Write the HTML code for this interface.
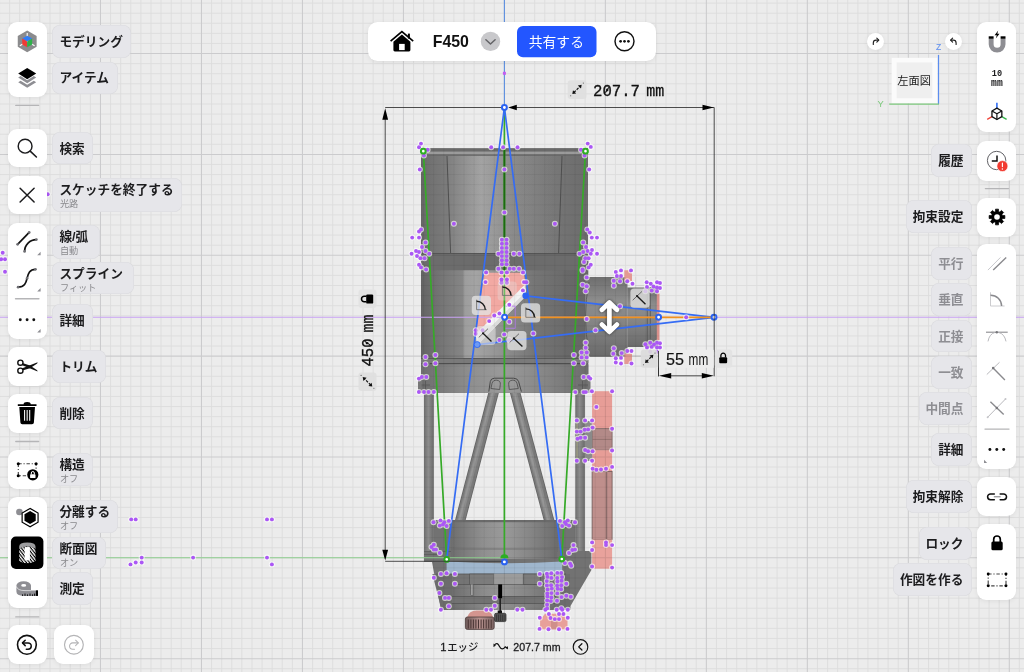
<!DOCTYPE html>
<html lang="ja"><head><meta charset="utf-8"><title>F450</title>
<style>
html,body{margin:0;padding:0}
body{width:1024px;height:672px;overflow:hidden;background:#ececec;position:relative;font-family:"Liberation Sans",sans-serif;color:#1c1c1e}
#cv,#ui{position:absolute;left:0;top:0;width:1024px;height:672px;display:block}
.pn{position:absolute;background:#fff;box-shadow:0 1px 5px rgba(0,0,0,.07)}
.pl{position:absolute;background:#e6e6ea;box-shadow:inset 0 0 0 .6px rgba(0,0,20,.05)}
.sr{position:absolute;left:0;top:0;width:1px;height:1px;overflow:hidden;color:transparent;font-size:1px;white-space:nowrap}
.tx{position:absolute;white-space:nowrap;line-height:1}
</style></head><body>
<svg id="cv" width="1024" height="672" viewBox="0 0 1024 672">
<path d="M9.60 0V672M19.70 0V672M29.79 0V672M39.89 0V672M49.99 0V672M60.09 0V672M70.19 0V672M80.28 0V672M90.38 0V672M110.58 0V672M120.68 0V672M130.77 0V672M140.87 0V672M150.97 0V672M161.07 0V672M171.17 0V672M181.26 0V672M191.36 0V672M211.56 0V672M221.66 0V672M231.75 0V672M241.85 0V672M251.95 0V672M262.05 0V672M272.15 0V672M282.24 0V672M292.34 0V672M312.54 0V672M322.64 0V672M332.73 0V672M342.83 0V672M352.93 0V672M363.03 0V672M373.13 0V672M383.22 0V672M393.32 0V672M413.52 0V672M423.62 0V672M433.71 0V672M443.81 0V672M453.91 0V672M464.01 0V672M474.11 0V672M484.20 0V672M494.30 0V672M514.50 0V672M524.60 0V672M534.69 0V672M544.79 0V672M554.89 0V672M564.99 0V672M575.09 0V672M585.18 0V672M595.28 0V672M615.48 0V672M625.58 0V672M635.67 0V672M645.77 0V672M655.87 0V672M665.97 0V672M676.07 0V672M686.16 0V672M696.26 0V672M716.46 0V672M726.56 0V672M736.65 0V672M746.75 0V672M756.85 0V672M766.95 0V672M777.05 0V672M787.14 0V672M797.24 0V672M817.44 0V672M827.54 0V672M837.63 0V672M847.73 0V672M857.83 0V672M867.93 0V672M878.03 0V672M888.12 0V672M898.22 0V672M918.42 0V672M928.52 0V672M938.61 0V672M948.71 0V672M958.81 0V672M968.91 0V672M979.01 0V672M989.10 0V672M999.20 0V672M1019.40 0V672M0 3.12H1024M0 13.21H1024M0 23.29H1024M0 33.38H1024M0 43.46H1024M0 63.63H1024M0 73.72H1024M0 83.80H1024M0 93.89H1024M0 103.97H1024M0 114.06H1024M0 124.14H1024M0 134.23H1024M0 144.31H1024M0 164.48H1024M0 174.57H1024M0 184.65H1024M0 194.74H1024M0 204.82H1024M0 214.91H1024M0 224.99H1024M0 235.08H1024M0 245.16H1024M0 265.33H1024M0 275.42H1024M0 285.50H1024M0 295.59H1024M0 305.67H1024M0 315.76H1024M0 325.84H1024M0 335.93H1024M0 346.01H1024M0 366.18H1024M0 376.27H1024M0 386.35H1024M0 396.44H1024M0 406.52H1024M0 416.61H1024M0 426.69H1024M0 436.78H1024M0 446.86H1024M0 467.03H1024M0 477.12H1024M0 487.20H1024M0 497.29H1024M0 507.37H1024M0 517.46H1024M0 527.54H1024M0 537.63H1024M0 547.71H1024M0 567.88H1024M0 577.97H1024M0 588.05H1024M0 598.14H1024M0 608.22H1024M0 618.31H1024M0 628.39H1024M0 638.48H1024M0 648.56H1024M0 668.73H1024" stroke="#dcdcdd" stroke-width=".9" fill="none"/>
<path d="M-0.50 0V672M100.48 0V672M201.46 0V672M302.44 0V672M403.42 0V672M504.40 0V672M605.38 0V672M706.36 0V672M807.34 0V672M908.32 0V672M1009.30 0V672M0 53.55H1024M0 154.40H1024M0 255.25H1024M0 356.10H1024M0 456.95H1024M0 557.80H1024M0 658.65H1024" stroke="#cbcbcd" stroke-width="1.05" fill="none"/>
<defs>
<linearGradient id="gTube" x1="0" x2="1" y1="0" y2="0">
 <stop offset="0" stop-color="#666"/><stop offset=".04" stop-color="#707070"/><stop offset=".16" stop-color="#7c7c7c"/>
 <stop offset=".36" stop-color="#a0a0a0"/><stop offset=".55" stop-color="#888"/><stop offset=".8" stop-color="#757575"/><stop offset="1" stop-color="#6c6c6c"/>
</linearGradient>
<linearGradient id="gInner" x1="0" x2="1" y1="0" y2="0">
 <stop offset="0" stop-color="#8a8a8a"/><stop offset=".3" stop-color="#acacac"/><stop offset=".6" stop-color="#929292"/><stop offset="1" stop-color="#7c7c7c"/>
</linearGradient>
<linearGradient id="gBody" x1="0" x2="1" y1="0" y2="0">
 <stop offset="0" stop-color="#646464"/><stop offset=".06" stop-color="#6d6d6d"/><stop offset=".25" stop-color="#868686"/><stop offset=".3" stop-color="#8a8a8a"/><stop offset=".7" stop-color="#6c6c6c"/><stop offset="1" stop-color="#666"/>
</linearGradient>
<linearGradient id="gCut" x1="0" x2="1" y1="0" y2="0">
 <stop offset="0" stop-color="#9c9c9c"/><stop offset=".12" stop-color="#a4a4a4"/><stop offset=".35" stop-color="#949494"/><stop offset=".7" stop-color="#767676"/><stop offset="1" stop-color="#6b6b6b"/>
</linearGradient>
<linearGradient id="gFoc" x1="0" x2="0" y1="0" y2="1">
 <stop offset="0" stop-color="#6e6e6e"/><stop offset=".3" stop-color="#8d8d8d"/><stop offset=".55" stop-color="#868686"/><stop offset="1" stop-color="#6a6a6a"/>
</linearGradient>
<linearGradient id="gPole" x1="0" x2="1" y1="0" y2="0">
 <stop offset="0" stop-color="#6e6e6e"/><stop offset=".45" stop-color="#8c8c8c"/><stop offset="1" stop-color="#6a6a6a"/>
</linearGradient>
<linearGradient id="gCell" x1="0" x2="1" y1="0" y2="0">
 <stop offset="0" stop-color="#6e6e6e"/><stop offset=".3" stop-color="#8f8f8f"/><stop offset=".5" stop-color="#9a9a9a"/><stop offset=".75" stop-color="#858585"/><stop offset="1" stop-color="#6c6c6c"/>
</linearGradient>
<linearGradient id="gBase" x1="0" x2="1" y1="0" y2="0">
 <stop offset="0" stop-color="#6c6c6c"/><stop offset=".4" stop-color="#8a8a8a"/><stop offset="1" stop-color="#6e6e6e"/>
</linearGradient>
<linearGradient id="gKnob" x1="0" x2="1" y1="0" y2="0">
 <stop offset="0" stop-color="#6e5b5a"/><stop offset=".5" stop-color="#b99390"/><stop offset="1" stop-color="#7a6463"/>
</linearGradient>
</defs>
<g><rect x="424" y="392" width="9.8" height="162" fill="url(#gPole)"/><rect x="575.3" y="392" width="9.6" height="162" fill="url(#gPole)"/><path d="M495.6 385L459.6 523" stroke="#676767" stroke-width="10.3" stroke-linecap="round"/><path d="M495.6 385L459.6 523" stroke="#7b7b7b" stroke-width="8.6" stroke-linecap="round"/><path d="M495.0 385L459.0 523" stroke="#8b8b8b" stroke-width="4.6" stroke-linecap="round"/><path d="M494.6 385L458.6 523" stroke="#969696" stroke-width="1.8" stroke-linecap="round"/><path d="M513.1 385L549.8 523" stroke="#676767" stroke-width="10.3" stroke-linecap="round"/><path d="M513.1 385L549.8 523" stroke="#7b7b7b" stroke-width="8.6" stroke-linecap="round"/><path d="M512.5 385L549.1999999999999 523" stroke="#8b8b8b" stroke-width="4.6" stroke-linecap="round"/><path d="M512.1 385L548.8 523" stroke="#969696" stroke-width="1.8" stroke-linecap="round"/><rect x="421" y="148.3" width="167" height="105" fill="url(#gTube)"/><rect x="421" y="148.3" width="167" height="3.6" fill="#6a6a6a"/><rect x="422.5" y="151.6" width="164" height="3" fill="#9b9b9b"/><rect x="421" y="154.6" width="167" height="1.2" fill="#666"/><path d="M447 156 L562 156 L558.6 253 L450.6 253 Z" fill="url(#gInner)" opacity=".22"/><path d="M447 156 L450.6 253 M562 156 L558.6 253" stroke="#4a4a4a" stroke-width=".9" fill="none"/><rect x="421" y="253" width="167.3" height="140" fill="url(#gBody)"/><rect x="421" y="253" width="167.3" height="1.2" fill="#555"/><rect x="421" y="254.2" width="167.3" height="16" fill="#6c6c6c"/><rect x="463.5" y="270.4" width="100" height="88" fill="url(#gCut)"/><rect x="421" y="358" width="167.3" height="1" fill="#5a5a5a"/><rect x="421" y="359" width="167.3" height="4" fill="#7a7a7a"/><rect x="430" y="363" width="150" height="1.4" fill="#4e4e4e"/><rect x="421" y="364.4" width="167.3" height="28.4" fill="url(#gCell)"/><rect x="418" y="377" width="4" height="15.8" fill="#777"/><rect x="587.5" y="377" width="3" height="15.8" fill="#777"/><path d="M421.5 385H430M425.5 381V390M578 385H588M582.5 381V390" stroke="#555" stroke-width=".8"/><path d="M488.8 391.6 L490.3 381.5 Q490.9 378.2 494.5 378.2 H513.5 Q517.6 378.2 518.6 381.5 L521.4 391.6" fill="none" stroke="#3f3f3f" stroke-width=".9"/><path d="M490.9 388.5 L492 383.5 Q493 379.8 496.8 380.2 Q500.8 380.8 500.3 384.5 L499.7 389.5 Z" fill="#9a9a9a" stroke="#454545" stroke-width=".75"/><path d="M518.3 388.5 L517 383.5 Q516 379.8 512.2 380.2 Q508.2 380.8 508.7 384.5 L509.3 389.5 Z" fill="#9a9a9a" stroke="#454545" stroke-width=".75"/><path d="M484 272.8 L524 272.8 L525.6 286 L476.6 336 L476.3 331 Z" fill="#f2a9a3"/><path d="M477.2 345.2 L526.2 295.7 L525.3 284.2 L475.7 334.2 Z" fill="#f3f3f3"/><path d="M477.2 345.2 L526.2 295.7 L525.9 291.5 L476.6 341 Z" fill="#dcdcdc"/><rect x="585" y="277" width="42.5" height="79.8" fill="url(#gFoc)"/><rect x="627.3" y="287.5" width="20" height="59.5" fill="url(#gFoc)"/><rect x="647" y="287" width="11.5" height="60.5" fill="url(#gFoc)"/><path d="M647.3 287V347.5M650.3 287V347.5" stroke="#555" stroke-width=".8"/><rect x="656.8" y="293.5" width="2.7" height="47" fill="#d9918c"/><path d="M589 282 Q582 317 589 352" fill="none" stroke="#555" stroke-width=".8"/><path d="M624.3 270.3H629L632 273.5V281H624.3Z" fill="#e39a94"/><path d="M624.3 364H629L632 361V353.5H624.3Z" fill="#e39a94"/><rect x="619" y="277" width="3" height="2" fill="#333"/><rect x="619" y="355" width="3" height="2" fill="#333"/><rect x="592.1" y="391.2" width="20" height="37.5" fill="#e79d97"/><rect x="592.1" y="428.7" width="20" height="21.5" fill="#b38a88" stroke="#6f5856" stroke-width=".7"/><rect x="592.1" y="450.2" width="20" height="21.5" fill="#e79d97"/><rect x="592.1" y="471.5" width="20" height="68" fill="#bf8f8c" stroke="#6f5856" stroke-width=".8"/><path d="M606.7 471.5V539.5" stroke="#6f5856" stroke-width=".8"/><path d="M592.1 439.4H612.1" stroke="#8a6866" stroke-width=".7"/><rect x="592.1" y="539.5" width="20" height="29.2" fill="#e9a29c"/><rect x="585" y="421" width="7.2" height="40" fill="#8a8a8a"/><path d="M577 421V461" stroke="#b9b98a" stroke-width=".8"/><path d="M433.8 520 H575.3 V552 H433.8 Z" fill="#707070"/><rect x="451" y="520" width="106.8" height="38.8" fill="url(#gCell)"/><rect x="451" y="520" width="106.8" height="2.5" fill="#6a6a6a"/><rect x="451" y="524" width="106.8" height="1" fill="#9d9d9d" opacity=".7"/><path d="M451 548 H557.8" stroke="#666" stroke-width=".8"/><path d="M424 551.5 H433.8 V520 H451 V559 H557.8 V520 H575.3 V551 H591.4 V570 L570.5 606 V610 H441 L432 562 H424 Z" fill="#727272"/><path d="M424 551.5 H451 M424 554.5 H440" stroke="#5a5a5a" stroke-width=".8"/><rect x="451" y="520" width="106.8" height="39" fill="url(#gCell)"/><rect x="451" y="520" width="106.8" height="2.2" fill="#6a6a6a"/><path d="M451 549 H557.8" stroke="#6a6a6a" stroke-width=".8"/><path d="M446.6 561.5 Q504.4 565 562.2 561.5 V574 H446.6 Z" fill="#9fb6cd"/><path d="M432.4 574H570V606L569 610H441.6Z" fill="#6c6c6c"/><rect x="452" y="574" width="105.5" height="10.5" fill="#747474"/><rect x="452" y="584.5" width="105.5" height="12" fill="url(#gCell)" opacity=".9"/><rect x="452" y="596.5" width="105.5" height="7" fill="#727272"/><rect x="452" y="603.5" width="105.5" height="6.5" fill="url(#gCell)" opacity=".75"/><path d="M436 574H566M452 584.5H557.5M452 596.5H557.5M452 603.5H557.5" stroke="#555" stroke-width=".8"/><rect x="469.7" y="574" width="24" height="10.5" fill="#7c7c7c" stroke="#4f4f4f" stroke-width=".6"/><rect x="493.7" y="574" width="29.5" height="10.2" fill="#9b9b9b"/><rect x="523.2" y="574" width="17" height="10.5" fill="#7c7c7c" stroke="#4f4f4f" stroke-width=".6"/><path d="M470.5 584.5 V594.5 Q470.5 596.2 473.2 595.6 V584.5" fill="#a0a0a0" stroke="#505050" stroke-width=".6"/><rect x="498.2" y="584.4" width="3.9" height="13.8" fill="#000"/><rect x="499.4" y="598" width="1.6" height="13" fill="#222"/><path d="M467 617.5 Q469 610.4 476.5 610.4 H484.5 Q491.5 610.4 493.2 617.5 Z" fill="#d4958f"/><rect x="465.4" y="617" width="28.8" height="12.4" rx="2" fill="url(#gKnob)" stroke="#4a3a39" stroke-width=".8"/><path d="M468.3 619.5V628.5M470.9 619.5V628.5M473.4 619.5V628.5M475.9 619.5V628.5M478.5 619.5V628.5M481.1 619.5V628.5M483.6 619.5V628.5M486.2 619.5V628.5M488.7 619.5V628.5M491.2 619.5V628.5" stroke="#4a3534" stroke-width="1"/><rect x="497.7" y="610.5" width="4.3" height="3" fill="#111"/><rect x="494.6" y="613.3" width="11.4" height="8.3" rx="1.5" fill="#555" stroke="#222" stroke-width=".7"/><path d="M496.6 614.5V621M498.5 614.5V621M500.4 614.5V621M502.3 614.5V621M504.2 614.5V621" stroke="#2c2c2c" stroke-width=".7"/><path d="M540.1 629.3 V620 L545 613.7 H562.5 L567.5 620 V629.3 Z" fill="#e8a09a"/><rect x="551" y="620" width="6.5" height="9.3" fill="#cf8f8a"/></g>
<clipPath id="mclip"><rect x="421" y="148.3" width="167.3" height="244.7"/><rect x="585" y="277" width="74" height="80"/><rect x="424" y="392" width="9.8" height="162"/><rect x="575.3" y="392" width="9.6" height="162"/><path d="M490.7 384 L500.7 384 L465.7 521 L454.8 521 Z M507.9 384 L518.1 384 L554.8 521 L543.6 521 Z"/><path d="M424 551.5 H433.8 V520 H575.3 V551 H591.4 V570 L570.5 606 V610 H441 L432 562 H424 Z"/><rect x="592.1" y="391.2" width="20" height="177.5"/></clipPath>
<g clip-path="url(#mclip)"><path d="M9.60 0V672M19.70 0V672M29.79 0V672M39.89 0V672M49.99 0V672M60.09 0V672M70.19 0V672M80.28 0V672M90.38 0V672M110.58 0V672M120.68 0V672M130.77 0V672M140.87 0V672M150.97 0V672M161.07 0V672M171.17 0V672M181.26 0V672M191.36 0V672M211.56 0V672M221.66 0V672M231.75 0V672M241.85 0V672M251.95 0V672M262.05 0V672M272.15 0V672M282.24 0V672M292.34 0V672M312.54 0V672M322.64 0V672M332.73 0V672M342.83 0V672M352.93 0V672M363.03 0V672M373.13 0V672M383.22 0V672M393.32 0V672M413.52 0V672M423.62 0V672M433.71 0V672M443.81 0V672M453.91 0V672M464.01 0V672M474.11 0V672M484.20 0V672M494.30 0V672M514.50 0V672M524.60 0V672M534.69 0V672M544.79 0V672M554.89 0V672M564.99 0V672M575.09 0V672M585.18 0V672M595.28 0V672M615.48 0V672M625.58 0V672M635.67 0V672M645.77 0V672M655.87 0V672M665.97 0V672M676.07 0V672M686.16 0V672M696.26 0V672M716.46 0V672M726.56 0V672M736.65 0V672M746.75 0V672M756.85 0V672M766.95 0V672M777.05 0V672M787.14 0V672M797.24 0V672M817.44 0V672M827.54 0V672M837.63 0V672M847.73 0V672M857.83 0V672M867.93 0V672M878.03 0V672M888.12 0V672M898.22 0V672M918.42 0V672M928.52 0V672M938.61 0V672M948.71 0V672M958.81 0V672M968.91 0V672M979.01 0V672M989.10 0V672M999.20 0V672M1019.40 0V672M0 3.12H1024M0 13.21H1024M0 23.29H1024M0 33.38H1024M0 43.46H1024M0 63.63H1024M0 73.72H1024M0 83.80H1024M0 93.89H1024M0 103.97H1024M0 114.06H1024M0 124.14H1024M0 134.23H1024M0 144.31H1024M0 164.48H1024M0 174.57H1024M0 184.65H1024M0 194.74H1024M0 204.82H1024M0 214.91H1024M0 224.99H1024M0 235.08H1024M0 245.16H1024M0 265.33H1024M0 275.42H1024M0 285.50H1024M0 295.59H1024M0 305.67H1024M0 315.76H1024M0 325.84H1024M0 335.93H1024M0 346.01H1024M0 366.18H1024M0 376.27H1024M0 386.35H1024M0 396.44H1024M0 406.52H1024M0 416.61H1024M0 426.69H1024M0 436.78H1024M0 446.86H1024M0 467.03H1024M0 477.12H1024M0 487.20H1024M0 497.29H1024M0 507.37H1024M0 517.46H1024M0 527.54H1024M0 537.63H1024M0 547.71H1024M0 567.88H1024M0 577.97H1024M0 588.05H1024M0 598.14H1024M0 608.22H1024M0 618.31H1024M0 628.39H1024M0 638.48H1024M0 648.56H1024M0 668.73H1024" stroke="#000" stroke-width=".9" opacity=".06" fill="none"/><path d="M-0.50 0V672M100.48 0V672M201.46 0V672M302.44 0V672M403.42 0V672M504.40 0V672M605.38 0V672M706.36 0V672M807.34 0V672M908.32 0V672M1009.30 0V672M0 53.55H1024M0 154.40H1024M0 255.25H1024M0 356.10H1024M0 456.95H1024M0 557.80H1024M0 658.65H1024" stroke="#000" stroke-width="1.05" opacity=".1" fill="none"/></g>
<path d="M0 557.8H504" stroke="#8fd08f" stroke-width="1.1"/><path d="M504.4 0V107" stroke="#5b8fe0" stroke-width="1.1"/><path d="M0 317.3H1024" stroke="#c9a2f4" stroke-width="1.1"/><path d="M423.3 151 L446.7 559.4 M585.5 151 L561.8 559 M504.4 107.5 V557" stroke="#36aa28" stroke-width="1.7" fill="none"/><path d="M504.4 150 V270" stroke="#1c6a10" stroke-width="1.8" fill="none"/><path d="M504.4 107.5 L446.7 559.4 M504.4 107.5 L561.8 559 M525.7 295.8 L713.9 317.3 L477.3 344.7" stroke="#356cf4" stroke-width="1.7" fill="none" stroke-linejoin="round"/><path d="M505.5 306.2 H515.2 V328.3 H505.5" stroke="#b77af0" stroke-width="1" fill="none" opacity=".8"/><path d="M504.4 317.3 H713.9" stroke="#f0921e" stroke-width="1.8"/><g fill="#fff" opacity=".66"><circle cx="421.0" cy="143.6" r="3.0"/><circle cx="419.0" cy="147.3" r="3.0"/><circle cx="427.6" cy="149.8" r="3.0"/><circle cx="423.9" cy="155.5" r="3.0"/><circle cx="419.8" cy="169.5" r="3.0"/><circle cx="491.2" cy="147.3" r="3.0"/><circle cx="503.1" cy="147.3" r="3.0"/><circle cx="517.5" cy="147.3" r="3.0"/><circle cx="504.4" cy="169.5" r="3.0"/><circle cx="504.4" cy="212.4" r="3.0"/><circle cx="453.9" cy="223.7" r="3.0"/><circle cx="554.9" cy="223.7" r="3.0"/><circle cx="587.7" cy="143.6" r="3.0"/><circle cx="590.8" cy="146.9" r="3.0"/><circle cx="581.0" cy="149.8" r="3.0"/><circle cx="584.6" cy="155.5" r="3.0"/><circle cx="589.2" cy="169.5" r="3.0"/><circle cx="421.0" cy="229.4" r="3.0"/><circle cx="419.0" cy="231.5" r="3.0"/><circle cx="412.2" cy="237.6" r="3.0"/><circle cx="419.0" cy="237.6" r="3.0"/><circle cx="425.5" cy="242.4" r="3.0"/><circle cx="419.0" cy="252.0" r="3.0"/><circle cx="411.6" cy="253.7" r="3.0"/><circle cx="425.5" cy="251.0" r="3.0"/><circle cx="429.2" cy="253.7" r="3.0"/><circle cx="420.4" cy="258.2" r="3.0"/><circle cx="424.5" cy="258.2" r="3.0"/><circle cx="419.0" cy="264.7" r="3.0"/><circle cx="421.0" cy="267.4" r="3.0"/><circle cx="426.1" cy="269.5" r="3.0"/><circle cx="416.0" cy="251.0" r="3.0"/><circle cx="422.0" cy="247.0" r="3.0"/><circle cx="417.0" cy="256.0" r="3.0"/><circle cx="587.3" cy="229.4" r="3.0"/><circle cx="589.8" cy="232.5" r="3.0"/><circle cx="591.8" cy="237.6" r="3.0"/><circle cx="597.0" cy="237.6" r="3.0"/><circle cx="583.2" cy="242.4" r="3.0"/><circle cx="579.5" cy="253.7" r="3.0"/><circle cx="583.2" cy="252.0" r="3.0"/><circle cx="587.7" cy="251.0" r="3.0"/><circle cx="590.8" cy="253.7" r="3.0"/><circle cx="597.0" cy="253.7" r="3.0"/><circle cx="585.3" cy="258.2" r="3.0"/><circle cx="588.7" cy="258.2" r="3.0"/><circle cx="590.8" cy="264.7" r="3.0"/><circle cx="588.7" cy="267.4" r="3.0"/><circle cx="582.6" cy="269.5" r="3.0"/><circle cx="586.0" cy="247.0" r="3.0"/><circle cx="592.0" cy="250.0" r="3.0"/><circle cx="584.0" cy="262.0" r="3.0"/><circle cx="498.4" cy="253.7" r="3.0"/><circle cx="513.8" cy="253.7" r="3.0"/><circle cx="519.4" cy="253.7" r="3.0"/><circle cx="486.1" cy="272.4" r="3.0"/><circle cx="498.4" cy="268.7" r="3.0"/><circle cx="509.7" cy="268.7" r="3.0"/><circle cx="513.8" cy="268.7" r="3.0"/><circle cx="519.0" cy="268.7" r="3.0"/><circle cx="523.0" cy="272.4" r="3.0"/><circle cx="501.5" cy="272.4" r="3.0"/><circle cx="506.9" cy="272.4" r="3.0"/><circle cx="506.9" cy="279.4" r="3.0"/><circle cx="506.9" cy="282.7" r="3.0"/><circle cx="522.9" cy="290.4" r="3.0"/><circle cx="485.5" cy="282.1" r="3.0"/><circle cx="524.0" cy="282.1" r="3.0"/><circle cx="526.3" cy="282.3" r="3.0"/><circle cx="501.5" cy="279.4" r="3.0"/><circle cx="501.5" cy="282.7" r="3.0"/><circle cx="509.3" cy="304.7" r="3.0"/><circle cx="494.3" cy="315.5" r="3.0"/><circle cx="499.4" cy="313.5" r="3.0"/><circle cx="489.2" cy="321.1" r="3.0"/><circle cx="509.3" cy="321.7" r="3.0"/><circle cx="475.8" cy="330.3" r="3.0"/><circle cx="475.8" cy="333.8" r="3.0"/><circle cx="482.6" cy="330.3" r="3.0"/><circle cx="504.2" cy="334.4" r="3.0"/><circle cx="499.4" cy="340.0" r="3.0"/><circle cx="509.3" cy="340.0" r="3.0"/><circle cx="533.3" cy="333.4" r="3.0"/><circle cx="582.6" cy="270.8" r="3.0"/><circle cx="586.7" cy="277.4" r="3.0"/><circle cx="582.6" cy="284.8" r="3.0"/><circle cx="586.7" cy="286.2" r="3.0"/><circle cx="585.7" cy="291.3" r="3.0"/><circle cx="586.7" cy="319.0" r="3.0"/><circle cx="595.5" cy="330.3" r="3.0"/><circle cx="585.7" cy="342.6" r="3.0"/><circle cx="585.7" cy="347.8" r="3.0"/><circle cx="581.6" cy="352.5" r="3.0"/><circle cx="586.7" cy="352.5" r="3.0"/><circle cx="581.6" cy="357.4" r="3.0"/><circle cx="586.7" cy="357.4" r="3.0"/><circle cx="583.2" cy="363.2" r="3.0"/><circle cx="573.8" cy="355.0" r="3.0"/><circle cx="573.8" cy="363.2" r="3.0"/><circle cx="425.5" cy="357.0" r="3.0"/><circle cx="435.4" cy="355.0" r="3.0"/><circle cx="425.5" cy="364.2" r="3.0"/><circle cx="435.4" cy="363.2" r="3.0"/><circle cx="418.9" cy="378.6" r="3.0"/><circle cx="421.8" cy="377.0" r="3.0"/><circle cx="426.3" cy="377.0" r="3.0"/><circle cx="418.9" cy="392.0" r="3.0"/><circle cx="424.0" cy="392.0" r="3.0"/><circle cx="433.8" cy="392.0" r="3.0"/><circle cx="428.5" cy="392.0" r="3.0"/><circle cx="583.6" cy="377.0" r="3.0"/><circle cx="588.7" cy="377.0" r="3.0"/><circle cx="590.3" cy="378.6" r="3.0"/><circle cx="575.3" cy="392.1" r="3.0"/><circle cx="583.6" cy="392.1" r="3.0"/><circle cx="585.8" cy="392.1" r="3.0"/><circle cx="591.9" cy="391.2" r="3.0"/><circle cx="612.1" cy="391.2" r="3.0"/><circle cx="615.8" cy="271.9" r="3.0"/><circle cx="621.0" cy="270.4" r="3.0"/><circle cx="631.0" cy="270.4" r="3.0"/><circle cx="616.9" cy="276.0" r="3.0"/><circle cx="621.0" cy="276.0" r="3.0"/><circle cx="613.8" cy="280.8" r="3.0"/><circle cx="620.0" cy="281.2" r="3.0"/><circle cx="627.3" cy="281.2" r="3.0"/><circle cx="613.8" cy="285.8" r="3.0"/><circle cx="632.5" cy="283.8" r="3.0"/><circle cx="646.7" cy="282.3" r="3.0"/><circle cx="650.8" cy="283.8" r="3.0"/><circle cx="657.0" cy="282.3" r="3.0"/><circle cx="660.0" cy="283.0" r="3.0"/><circle cx="647.0" cy="287.0" r="3.0"/><circle cx="657.0" cy="287.5" r="3.0"/><circle cx="660.0" cy="288.0" r="3.0"/><circle cx="651.7" cy="290.6" r="3.0"/><circle cx="657.0" cy="291.2" r="3.0"/><circle cx="645.4" cy="291.2" r="3.0"/><circle cx="653.5" cy="286.5" r="3.0"/><circle cx="620.0" cy="306.2" r="3.0"/><circle cx="686.2" cy="317.3" r="3.0"/><circle cx="645.4" cy="344.2" r="3.0"/><circle cx="650.2" cy="342.7" r="3.0"/><circle cx="657.0" cy="342.7" r="3.0"/><circle cx="660.0" cy="343.3" r="3.0"/><circle cx="647.0" cy="347.5" r="3.0"/><circle cx="651.7" cy="346.9" r="3.0"/><circle cx="657.0" cy="347.5" r="3.0"/><circle cx="660.0" cy="347.5" r="3.0"/><circle cx="650.2" cy="351.7" r="3.0"/><circle cx="657.0" cy="351.7" r="3.0"/><circle cx="660.0" cy="352.0" r="3.0"/><circle cx="654.0" cy="344.5" r="3.0"/><circle cx="613.8" cy="348.3" r="3.0"/><circle cx="613.3" cy="353.8" r="3.0"/><circle cx="621.7" cy="353.1" r="3.0"/><circle cx="627.3" cy="351.0" r="3.0"/><circle cx="631.5" cy="351.0" r="3.0"/><circle cx="615.8" cy="358.3" r="3.0"/><circle cx="621.0" cy="357.9" r="3.0"/><circle cx="615.8" cy="362.5" r="3.0"/><circle cx="621.0" cy="363.5" r="3.0"/><circle cx="631.5" cy="363.5" r="3.0"/><circle cx="596.4" cy="406.9" r="3.0"/><circle cx="576.8" cy="420.4" r="3.0"/><circle cx="585.1" cy="420.4" r="3.0"/><circle cx="592.1" cy="420.4" r="3.0"/><circle cx="576.8" cy="431.6" r="3.0"/><circle cx="580.6" cy="431.6" r="3.0"/><circle cx="584.7" cy="429.8" r="3.0"/><circle cx="588.1" cy="429.4" r="3.0"/><circle cx="592.6" cy="427.6" r="3.0"/><circle cx="612.1" cy="428.7" r="3.0"/><circle cx="577.5" cy="438.8" r="3.0"/><circle cx="580.6" cy="437.7" r="3.0"/><circle cx="585.1" cy="437.7" r="3.0"/><circle cx="585.1" cy="450.0" r="3.0"/><circle cx="588.1" cy="451.2" r="3.0"/><circle cx="592.6" cy="451.2" r="3.0"/><circle cx="612.1" cy="450.5" r="3.0"/><circle cx="576.8" cy="460.8" r="3.0"/><circle cx="585.1" cy="460.8" r="3.0"/><circle cx="592.1" cy="460.8" r="3.0"/><circle cx="592.6" cy="468.7" r="3.0"/><circle cx="596.4" cy="469.8" r="3.0"/><circle cx="606.0" cy="468.7" r="3.0"/><circle cx="612.1" cy="466.9" r="3.0"/><circle cx="601.0" cy="469.5" r="3.0"/><circle cx="433.5" cy="522.2" r="3.0"/><circle cx="440.5" cy="520.4" r="3.0"/><circle cx="444.3" cy="522.2" r="3.0"/><circle cx="448.8" cy="520.9" r="3.0"/><circle cx="439.8" cy="525.6" r="3.0"/><circle cx="446.6" cy="526.0" r="3.0"/><circle cx="443.0" cy="524.5" r="3.0"/><circle cx="433.8" cy="544.7" r="3.0"/><circle cx="433.8" cy="549.6" r="3.0"/><circle cx="436.0" cy="549.6" r="3.0"/><circle cx="439.8" cy="553.0" r="3.0"/><circle cx="431.5" cy="547.0" r="3.0"/><circle cx="560.0" cy="520.9" r="3.0"/><circle cx="564.9" cy="522.2" r="3.0"/><circle cx="567.8" cy="520.4" r="3.0"/><circle cx="575.0" cy="522.2" r="3.0"/><circle cx="562.2" cy="526.0" r="3.0"/><circle cx="569.0" cy="525.6" r="3.0"/><circle cx="566.0" cy="524.0" r="3.0"/><circle cx="573.5" cy="545.1" r="3.0"/><circle cx="575.0" cy="549.6" r="3.0"/><circle cx="572.3" cy="550.0" r="3.0"/><circle cx="569.0" cy="553.0" r="3.0"/><circle cx="564.9" cy="563.1" r="3.0"/><circle cx="570.1" cy="563.6" r="3.0"/><circle cx="571.2" cy="565.8" r="3.0"/><circle cx="592.1" cy="542.4" r="3.0"/><circle cx="606.0" cy="542.4" r="3.0"/><circle cx="612.1" cy="545.1" r="3.0"/><circle cx="606.0" cy="545.1" r="3.0"/><circle cx="592.1" cy="550.0" r="3.0"/><circle cx="592.1" cy="566.5" r="3.0"/><circle cx="612.1" cy="567.6" r="3.0"/><circle cx="440.9" cy="573.9" r="3.0"/><circle cx="446.6" cy="573.2" r="3.0"/><circle cx="454.9" cy="573.9" r="3.0"/><circle cx="433.8" cy="577.7" r="3.0"/><circle cx="440.9" cy="583.8" r="3.0"/><circle cx="454.9" cy="583.8" r="3.0"/><circle cx="439.4" cy="593.0" r="3.0"/><circle cx="445.0" cy="597.9" r="3.0"/><circle cx="448.8" cy="597.9" r="3.0"/><circle cx="448.8" cy="606.2" r="3.0"/><circle cx="440.9" cy="609.8" r="3.0"/><circle cx="494.8" cy="597.9" r="3.0"/><circle cx="494.8" cy="605.8" r="3.0"/><circle cx="486.3" cy="609.8" r="3.0"/><circle cx="491.0" cy="609.8" r="3.0"/><circle cx="517.3" cy="609.8" r="3.0"/><circle cx="522.5" cy="609.8" r="3.0"/><circle cx="539.8" cy="573.9" r="3.0"/><circle cx="539.8" cy="583.8" r="3.0"/><circle cx="566.3" cy="583.8" r="3.0"/><circle cx="566.3" cy="595.7" r="3.0"/><circle cx="570.8" cy="596.8" r="3.0"/><circle cx="567.8" cy="609.8" r="3.0"/><circle cx="562.2" cy="609.8" r="3.0"/><circle cx="545.4" cy="609.8" r="3.0"/><circle cx="556.7" cy="609.8" r="3.0"/><circle cx="539.8" cy="617.8" r="3.0"/><circle cx="567.8" cy="617.8" r="3.0"/><circle cx="539.5" cy="628.9" r="3.0"/><circle cx="548.5" cy="629.3" r="3.0"/><circle cx="559.0" cy="629.3" r="3.0"/><circle cx="567.5" cy="628.9" r="3.0"/><circle cx="548.9" cy="614.0" r="3.0"/><circle cx="559.0" cy="614.0" r="3.0"/><circle cx="563.5" cy="614.0" r="3.0"/><circle cx="550.5" cy="618.0" r="3.0"/><circle cx="554.8" cy="619.1" r="3.0"/><circle cx="559.0" cy="619.1" r="3.0"/><circle cx="2.7" cy="252.7" r="3.0"/><circle cx="5.0" cy="259.3" r="3.0"/><circle cx="1.2" cy="259.3" r="3.0"/><circle cx="5.0" cy="271.7" r="3.0"/><circle cx="47.7" cy="194.3" r="3.0"/><circle cx="131.2" cy="519.4" r="3.0"/><circle cx="135.7" cy="519.4" r="3.0"/><circle cx="267.0" cy="519.4" r="3.0"/><circle cx="271.9" cy="519.4" r="3.0"/><circle cx="141.7" cy="557.6" r="3.0"/><circle cx="193.1" cy="557.6" r="3.0"/><circle cx="267.0" cy="557.6" r="3.0"/><circle cx="130.5" cy="564.4" r="3.0"/><circle cx="135.7" cy="562.5" r="3.0"/><circle cx="141.7" cy="562.5" r="3.0"/><circle cx="271.9" cy="564.4" r="3.0"/><circle cx="501.9" cy="239.7" r="3.0"/><circle cx="506.6" cy="239.7" r="3.0"/><circle cx="501.9" cy="243.8" r="3.0"/><circle cx="506.6" cy="243.8" r="3.0"/><circle cx="501.9" cy="247.9" r="3.0"/><circle cx="506.6" cy="247.9" r="3.0"/><circle cx="501.9" cy="252.0" r="3.0"/><circle cx="506.6" cy="252.0" r="3.0"/><circle cx="501.9" cy="256.1" r="3.0"/><circle cx="506.6" cy="256.1" r="3.0"/><circle cx="501.9" cy="260.2" r="3.0"/><circle cx="506.6" cy="260.2" r="3.0"/><circle cx="501.9" cy="264.3" r="3.0"/><circle cx="506.6" cy="264.3" r="3.0"/><circle cx="546.9" cy="573.7" r="3.0"/><circle cx="551.3" cy="573.3" r="3.0"/><circle cx="557.3" cy="572.9" r="3.0"/><circle cx="561.2" cy="573.0" r="3.0"/><circle cx="547.5" cy="576.9" r="3.0"/><circle cx="551.4" cy="577.9" r="3.0"/><circle cx="557.2" cy="578.0" r="3.0"/><circle cx="562.0" cy="577.1" r="3.0"/><circle cx="546.8" cy="581.1" r="3.0"/><circle cx="557.4" cy="581.5" r="3.0"/><circle cx="561.6" cy="580.8" r="3.0"/><circle cx="546.9" cy="585.4" r="3.0"/><circle cx="551.1" cy="585.3" r="3.0"/><circle cx="557.1" cy="585.6" r="3.0"/><circle cx="561.3" cy="585.3" r="3.0"/><circle cx="547.6" cy="589.4" r="3.0"/><circle cx="551.8" cy="588.6" r="3.0"/><circle cx="557.6" cy="588.7" r="3.0"/><circle cx="561.1" cy="589.3" r="3.0"/><circle cx="547.3" cy="593.5" r="3.0"/><circle cx="551.5" cy="593.1" r="3.0"/><circle cx="557.3" cy="593.4" r="3.0"/><circle cx="547.4" cy="596.4" r="3.0"/><circle cx="551.4" cy="597.5" r="3.0"/><circle cx="561.5" cy="597.1" r="3.0"/><circle cx="547.2" cy="600.4" r="3.0"/><circle cx="550.9" cy="601.1" r="3.0"/><circle cx="557.0" cy="600.7" r="3.0"/><circle cx="547.1" cy="604.8" r="3.0"/><circle cx="547.1" cy="608.4" r="3.0"/><circle cx="561.3" cy="608.3" r="3.0"/></g>
<g fill="#ab57f5"><circle cx="421.0" cy="143.6" r="1.95"/><circle cx="419.0" cy="147.3" r="1.95"/><circle cx="427.6" cy="149.8" r="1.95"/><circle cx="423.9" cy="155.5" r="1.95"/><circle cx="419.8" cy="169.5" r="1.95"/><circle cx="491.2" cy="147.3" r="1.95"/><circle cx="503.1" cy="147.3" r="1.95"/><circle cx="517.5" cy="147.3" r="1.95"/><circle cx="504.4" cy="169.5" r="1.95"/><circle cx="504.4" cy="212.4" r="1.95"/><circle cx="453.9" cy="223.7" r="1.95"/><circle cx="554.9" cy="223.7" r="1.95"/><circle cx="587.7" cy="143.6" r="1.95"/><circle cx="590.8" cy="146.9" r="1.95"/><circle cx="581.0" cy="149.8" r="1.95"/><circle cx="584.6" cy="155.5" r="1.95"/><circle cx="589.2" cy="169.5" r="1.95"/><circle cx="421.0" cy="229.4" r="1.95"/><circle cx="419.0" cy="231.5" r="1.95"/><circle cx="412.2" cy="237.6" r="1.95"/><circle cx="419.0" cy="237.6" r="1.95"/><circle cx="425.5" cy="242.4" r="1.95"/><circle cx="419.0" cy="252.0" r="1.95"/><circle cx="411.6" cy="253.7" r="1.95"/><circle cx="425.5" cy="251.0" r="1.95"/><circle cx="429.2" cy="253.7" r="1.95"/><circle cx="420.4" cy="258.2" r="1.95"/><circle cx="424.5" cy="258.2" r="1.95"/><circle cx="419.0" cy="264.7" r="1.95"/><circle cx="421.0" cy="267.4" r="1.95"/><circle cx="426.1" cy="269.5" r="1.95"/><circle cx="416.0" cy="251.0" r="1.95"/><circle cx="422.0" cy="247.0" r="1.95"/><circle cx="417.0" cy="256.0" r="1.95"/><circle cx="587.3" cy="229.4" r="1.95"/><circle cx="589.8" cy="232.5" r="1.95"/><circle cx="591.8" cy="237.6" r="1.95"/><circle cx="597.0" cy="237.6" r="1.95"/><circle cx="583.2" cy="242.4" r="1.95"/><circle cx="579.5" cy="253.7" r="1.95"/><circle cx="583.2" cy="252.0" r="1.95"/><circle cx="587.7" cy="251.0" r="1.95"/><circle cx="590.8" cy="253.7" r="1.95"/><circle cx="597.0" cy="253.7" r="1.95"/><circle cx="585.3" cy="258.2" r="1.95"/><circle cx="588.7" cy="258.2" r="1.95"/><circle cx="590.8" cy="264.7" r="1.95"/><circle cx="588.7" cy="267.4" r="1.95"/><circle cx="582.6" cy="269.5" r="1.95"/><circle cx="586.0" cy="247.0" r="1.95"/><circle cx="592.0" cy="250.0" r="1.95"/><circle cx="584.0" cy="262.0" r="1.95"/><circle cx="498.4" cy="253.7" r="1.95"/><circle cx="513.8" cy="253.7" r="1.95"/><circle cx="519.4" cy="253.7" r="1.95"/><circle cx="486.1" cy="272.4" r="1.95"/><circle cx="498.4" cy="268.7" r="1.95"/><circle cx="509.7" cy="268.7" r="1.95"/><circle cx="513.8" cy="268.7" r="1.95"/><circle cx="519.0" cy="268.7" r="1.95"/><circle cx="523.0" cy="272.4" r="1.95"/><circle cx="501.5" cy="272.4" r="1.95"/><circle cx="506.9" cy="272.4" r="1.95"/><circle cx="506.9" cy="279.4" r="1.95"/><circle cx="506.9" cy="282.7" r="1.95"/><circle cx="522.9" cy="290.4" r="1.95"/><circle cx="485.5" cy="282.1" r="1.95"/><circle cx="524.0" cy="282.1" r="1.95"/><circle cx="526.3" cy="282.3" r="1.95"/><circle cx="501.5" cy="279.4" r="1.95"/><circle cx="501.5" cy="282.7" r="1.95"/><circle cx="509.3" cy="304.7" r="1.95"/><circle cx="494.3" cy="315.5" r="1.95"/><circle cx="499.4" cy="313.5" r="1.95"/><circle cx="489.2" cy="321.1" r="1.95"/><circle cx="509.3" cy="321.7" r="1.95"/><circle cx="475.8" cy="330.3" r="1.95"/><circle cx="475.8" cy="333.8" r="1.95"/><circle cx="482.6" cy="330.3" r="1.95"/><circle cx="504.2" cy="334.4" r="1.95"/><circle cx="499.4" cy="340.0" r="1.95"/><circle cx="509.3" cy="340.0" r="1.95"/><circle cx="533.3" cy="333.4" r="1.95"/><circle cx="582.6" cy="270.8" r="1.95"/><circle cx="586.7" cy="277.4" r="1.95"/><circle cx="582.6" cy="284.8" r="1.95"/><circle cx="586.7" cy="286.2" r="1.95"/><circle cx="585.7" cy="291.3" r="1.95"/><circle cx="586.7" cy="319.0" r="1.95"/><circle cx="595.5" cy="330.3" r="1.95"/><circle cx="585.7" cy="342.6" r="1.95"/><circle cx="585.7" cy="347.8" r="1.95"/><circle cx="581.6" cy="352.5" r="1.95"/><circle cx="586.7" cy="352.5" r="1.95"/><circle cx="581.6" cy="357.4" r="1.95"/><circle cx="586.7" cy="357.4" r="1.95"/><circle cx="583.2" cy="363.2" r="1.95"/><circle cx="573.8" cy="355.0" r="1.95"/><circle cx="573.8" cy="363.2" r="1.95"/><circle cx="425.5" cy="357.0" r="1.95"/><circle cx="435.4" cy="355.0" r="1.95"/><circle cx="425.5" cy="364.2" r="1.95"/><circle cx="435.4" cy="363.2" r="1.95"/><circle cx="418.9" cy="378.6" r="1.95"/><circle cx="421.8" cy="377.0" r="1.95"/><circle cx="426.3" cy="377.0" r="1.95"/><circle cx="418.9" cy="392.0" r="1.95"/><circle cx="424.0" cy="392.0" r="1.95"/><circle cx="433.8" cy="392.0" r="1.95"/><circle cx="428.5" cy="392.0" r="1.95"/><circle cx="583.6" cy="377.0" r="1.95"/><circle cx="588.7" cy="377.0" r="1.95"/><circle cx="590.3" cy="378.6" r="1.95"/><circle cx="575.3" cy="392.1" r="1.95"/><circle cx="583.6" cy="392.1" r="1.95"/><circle cx="585.8" cy="392.1" r="1.95"/><circle cx="591.9" cy="391.2" r="1.95"/><circle cx="612.1" cy="391.2" r="1.95"/><circle cx="615.8" cy="271.9" r="1.95"/><circle cx="621.0" cy="270.4" r="1.95"/><circle cx="631.0" cy="270.4" r="1.95"/><circle cx="616.9" cy="276.0" r="1.95"/><circle cx="621.0" cy="276.0" r="1.95"/><circle cx="613.8" cy="280.8" r="1.95"/><circle cx="620.0" cy="281.2" r="1.95"/><circle cx="627.3" cy="281.2" r="1.95"/><circle cx="613.8" cy="285.8" r="1.95"/><circle cx="632.5" cy="283.8" r="1.95"/><circle cx="646.7" cy="282.3" r="1.95"/><circle cx="650.8" cy="283.8" r="1.95"/><circle cx="657.0" cy="282.3" r="1.95"/><circle cx="660.0" cy="283.0" r="1.95"/><circle cx="647.0" cy="287.0" r="1.95"/><circle cx="657.0" cy="287.5" r="1.95"/><circle cx="660.0" cy="288.0" r="1.95"/><circle cx="651.7" cy="290.6" r="1.95"/><circle cx="657.0" cy="291.2" r="1.95"/><circle cx="645.4" cy="291.2" r="1.95"/><circle cx="653.5" cy="286.5" r="1.95"/><circle cx="620.0" cy="306.2" r="1.95"/><circle cx="686.2" cy="317.3" r="1.95"/><circle cx="645.4" cy="344.2" r="1.95"/><circle cx="650.2" cy="342.7" r="1.95"/><circle cx="657.0" cy="342.7" r="1.95"/><circle cx="660.0" cy="343.3" r="1.95"/><circle cx="647.0" cy="347.5" r="1.95"/><circle cx="651.7" cy="346.9" r="1.95"/><circle cx="657.0" cy="347.5" r="1.95"/><circle cx="660.0" cy="347.5" r="1.95"/><circle cx="650.2" cy="351.7" r="1.95"/><circle cx="657.0" cy="351.7" r="1.95"/><circle cx="660.0" cy="352.0" r="1.95"/><circle cx="654.0" cy="344.5" r="1.95"/><circle cx="613.8" cy="348.3" r="1.95"/><circle cx="613.3" cy="353.8" r="1.95"/><circle cx="621.7" cy="353.1" r="1.95"/><circle cx="627.3" cy="351.0" r="1.95"/><circle cx="631.5" cy="351.0" r="1.95"/><circle cx="615.8" cy="358.3" r="1.95"/><circle cx="621.0" cy="357.9" r="1.95"/><circle cx="615.8" cy="362.5" r="1.95"/><circle cx="621.0" cy="363.5" r="1.95"/><circle cx="631.5" cy="363.5" r="1.95"/><circle cx="596.4" cy="406.9" r="1.95"/><circle cx="576.8" cy="420.4" r="1.95"/><circle cx="585.1" cy="420.4" r="1.95"/><circle cx="592.1" cy="420.4" r="1.95"/><circle cx="576.8" cy="431.6" r="1.95"/><circle cx="580.6" cy="431.6" r="1.95"/><circle cx="584.7" cy="429.8" r="1.95"/><circle cx="588.1" cy="429.4" r="1.95"/><circle cx="592.6" cy="427.6" r="1.95"/><circle cx="612.1" cy="428.7" r="1.95"/><circle cx="577.5" cy="438.8" r="1.95"/><circle cx="580.6" cy="437.7" r="1.95"/><circle cx="585.1" cy="437.7" r="1.95"/><circle cx="585.1" cy="450.0" r="1.95"/><circle cx="588.1" cy="451.2" r="1.95"/><circle cx="592.6" cy="451.2" r="1.95"/><circle cx="612.1" cy="450.5" r="1.95"/><circle cx="576.8" cy="460.8" r="1.95"/><circle cx="585.1" cy="460.8" r="1.95"/><circle cx="592.1" cy="460.8" r="1.95"/><circle cx="592.6" cy="468.7" r="1.95"/><circle cx="596.4" cy="469.8" r="1.95"/><circle cx="606.0" cy="468.7" r="1.95"/><circle cx="612.1" cy="466.9" r="1.95"/><circle cx="601.0" cy="469.5" r="1.95"/><circle cx="433.5" cy="522.2" r="1.95"/><circle cx="440.5" cy="520.4" r="1.95"/><circle cx="444.3" cy="522.2" r="1.95"/><circle cx="448.8" cy="520.9" r="1.95"/><circle cx="439.8" cy="525.6" r="1.95"/><circle cx="446.6" cy="526.0" r="1.95"/><circle cx="443.0" cy="524.5" r="1.95"/><circle cx="433.8" cy="544.7" r="1.95"/><circle cx="433.8" cy="549.6" r="1.95"/><circle cx="436.0" cy="549.6" r="1.95"/><circle cx="439.8" cy="553.0" r="1.95"/><circle cx="431.5" cy="547.0" r="1.95"/><circle cx="560.0" cy="520.9" r="1.95"/><circle cx="564.9" cy="522.2" r="1.95"/><circle cx="567.8" cy="520.4" r="1.95"/><circle cx="575.0" cy="522.2" r="1.95"/><circle cx="562.2" cy="526.0" r="1.95"/><circle cx="569.0" cy="525.6" r="1.95"/><circle cx="566.0" cy="524.0" r="1.95"/><circle cx="573.5" cy="545.1" r="1.95"/><circle cx="575.0" cy="549.6" r="1.95"/><circle cx="572.3" cy="550.0" r="1.95"/><circle cx="569.0" cy="553.0" r="1.95"/><circle cx="564.9" cy="563.1" r="1.95"/><circle cx="570.1" cy="563.6" r="1.95"/><circle cx="571.2" cy="565.8" r="1.95"/><circle cx="592.1" cy="542.4" r="1.95"/><circle cx="606.0" cy="542.4" r="1.95"/><circle cx="612.1" cy="545.1" r="1.95"/><circle cx="606.0" cy="545.1" r="1.95"/><circle cx="592.1" cy="550.0" r="1.95"/><circle cx="592.1" cy="566.5" r="1.95"/><circle cx="612.1" cy="567.6" r="1.95"/><circle cx="440.9" cy="573.9" r="1.95"/><circle cx="446.6" cy="573.2" r="1.95"/><circle cx="454.9" cy="573.9" r="1.95"/><circle cx="433.8" cy="577.7" r="1.95"/><circle cx="440.9" cy="583.8" r="1.95"/><circle cx="454.9" cy="583.8" r="1.95"/><circle cx="439.4" cy="593.0" r="1.95"/><circle cx="445.0" cy="597.9" r="1.95"/><circle cx="448.8" cy="597.9" r="1.95"/><circle cx="448.8" cy="606.2" r="1.95"/><circle cx="440.9" cy="609.8" r="1.95"/><circle cx="494.8" cy="597.9" r="1.95"/><circle cx="494.8" cy="605.8" r="1.95"/><circle cx="486.3" cy="609.8" r="1.95"/><circle cx="491.0" cy="609.8" r="1.95"/><circle cx="517.3" cy="609.8" r="1.95"/><circle cx="522.5" cy="609.8" r="1.95"/><circle cx="539.8" cy="573.9" r="1.95"/><circle cx="539.8" cy="583.8" r="1.95"/><circle cx="566.3" cy="583.8" r="1.95"/><circle cx="566.3" cy="595.7" r="1.95"/><circle cx="570.8" cy="596.8" r="1.95"/><circle cx="567.8" cy="609.8" r="1.95"/><circle cx="562.2" cy="609.8" r="1.95"/><circle cx="545.4" cy="609.8" r="1.95"/><circle cx="556.7" cy="609.8" r="1.95"/><circle cx="539.8" cy="617.8" r="1.95"/><circle cx="567.8" cy="617.8" r="1.95"/><circle cx="539.5" cy="628.9" r="1.95"/><circle cx="548.5" cy="629.3" r="1.95"/><circle cx="559.0" cy="629.3" r="1.95"/><circle cx="567.5" cy="628.9" r="1.95"/><circle cx="548.9" cy="614.0" r="1.95"/><circle cx="559.0" cy="614.0" r="1.95"/><circle cx="563.5" cy="614.0" r="1.95"/><circle cx="550.5" cy="618.0" r="1.95"/><circle cx="554.8" cy="619.1" r="1.95"/><circle cx="559.0" cy="619.1" r="1.95"/><circle cx="2.7" cy="252.7" r="1.95"/><circle cx="5.0" cy="259.3" r="1.95"/><circle cx="1.2" cy="259.3" r="1.95"/><circle cx="5.0" cy="271.7" r="1.95"/><circle cx="47.7" cy="194.3" r="1.95"/><circle cx="131.2" cy="519.4" r="1.95"/><circle cx="135.7" cy="519.4" r="1.95"/><circle cx="267.0" cy="519.4" r="1.95"/><circle cx="271.9" cy="519.4" r="1.95"/><circle cx="141.7" cy="557.6" r="1.95"/><circle cx="193.1" cy="557.6" r="1.95"/><circle cx="267.0" cy="557.6" r="1.95"/><circle cx="130.5" cy="564.4" r="1.95"/><circle cx="135.7" cy="562.5" r="1.95"/><circle cx="141.7" cy="562.5" r="1.95"/><circle cx="271.9" cy="564.4" r="1.95"/><circle cx="501.9" cy="239.7" r="1.95"/><circle cx="506.6" cy="239.7" r="1.95"/><circle cx="501.9" cy="243.8" r="1.95"/><circle cx="506.6" cy="243.8" r="1.95"/><circle cx="501.9" cy="247.9" r="1.95"/><circle cx="506.6" cy="247.9" r="1.95"/><circle cx="501.9" cy="252.0" r="1.95"/><circle cx="506.6" cy="252.0" r="1.95"/><circle cx="501.9" cy="256.1" r="1.95"/><circle cx="506.6" cy="256.1" r="1.95"/><circle cx="501.9" cy="260.2" r="1.95"/><circle cx="506.6" cy="260.2" r="1.95"/><circle cx="501.9" cy="264.3" r="1.95"/><circle cx="506.6" cy="264.3" r="1.95"/><circle cx="546.9" cy="573.7" r="1.95"/><circle cx="551.3" cy="573.3" r="1.95"/><circle cx="557.3" cy="572.9" r="1.95"/><circle cx="561.2" cy="573.0" r="1.95"/><circle cx="547.5" cy="576.9" r="1.95"/><circle cx="551.4" cy="577.9" r="1.95"/><circle cx="557.2" cy="578.0" r="1.95"/><circle cx="562.0" cy="577.1" r="1.95"/><circle cx="546.8" cy="581.1" r="1.95"/><circle cx="557.4" cy="581.5" r="1.95"/><circle cx="561.6" cy="580.8" r="1.95"/><circle cx="546.9" cy="585.4" r="1.95"/><circle cx="551.1" cy="585.3" r="1.95"/><circle cx="557.1" cy="585.6" r="1.95"/><circle cx="561.3" cy="585.3" r="1.95"/><circle cx="547.6" cy="589.4" r="1.95"/><circle cx="551.8" cy="588.6" r="1.95"/><circle cx="557.6" cy="588.7" r="1.95"/><circle cx="561.1" cy="589.3" r="1.95"/><circle cx="547.3" cy="593.5" r="1.95"/><circle cx="551.5" cy="593.1" r="1.95"/><circle cx="557.3" cy="593.4" r="1.95"/><circle cx="547.4" cy="596.4" r="1.95"/><circle cx="551.4" cy="597.5" r="1.95"/><circle cx="561.5" cy="597.1" r="1.95"/><circle cx="547.2" cy="600.4" r="1.95"/><circle cx="550.9" cy="601.1" r="1.95"/><circle cx="557.0" cy="600.7" r="1.95"/><circle cx="547.1" cy="604.8" r="1.95"/><circle cx="547.1" cy="608.4" r="1.95"/><circle cx="561.3" cy="608.3" r="1.95"/></g>
<rect x="502.9" y="71.8" width="3" height="3" fill="#c45cf0"/>
<g transform="translate(507.2 291)"><rect x="-9.6" y="-9.6" width="19.2" height="19.2" rx="3.6" fill="#e3e3e3" opacity="0.33"/><path d="M-4.8 -5.6V4.4H5.4" fill="none" stroke="#6e6e6e" stroke-width=".85"/><path d="M-4.8 -4 A8.6 8.6 0 0 1 3.9 4.4" fill="none" stroke="#1c1c1c" stroke-width="1.45"/></g>
<g transform="translate(481.4 305.3)"><rect x="-9.6" y="-9.6" width="19.2" height="19.2" rx="3.6" fill="#e3e3e3" opacity="0.78"/><path d="M-4.8 -5.6V4.4H5.4" fill="none" stroke="#6e6e6e" stroke-width=".85"/><path d="M-4.8 -4 A8.6 8.6 0 0 1 3.9 4.4" fill="none" stroke="#1c1c1c" stroke-width="1.45"/></g>
<g transform="translate(530.6 312.9)"><rect x="-9.6" y="-9.6" width="19.2" height="19.2" rx="3.6" fill="#e3e3e3" opacity="0.78"/><path d="M-4.8 -5.6V4.4H5.4" fill="none" stroke="#6e6e6e" stroke-width=".85"/><path d="M-4.8 -4 A8.6 8.6 0 0 1 3.9 4.4" fill="none" stroke="#1c1c1c" stroke-width="1.45"/></g>
<g transform="translate(486 335.5)"><rect x="-9.6" y="-9.6" width="19.2" height="19.2" rx="3.6" fill="#e3e3e3" opacity="0.6"/><path d="M-7.3 2 L2.1 -6.9" stroke="#555" stroke-width=".85" fill="none"/><path d="M-3 -2.2 L5.5 6" stroke="#1a1a1a" stroke-width="1.35" fill="none"/><circle cx="-3" cy="-2.2" r="1.05" fill="#1a1a1a"/></g>
<g transform="translate(516.9 340.6)"><rect x="-9.6" y="-9.6" width="19.2" height="19.2" rx="3.6" fill="#e3e3e3" opacity="0.78"/><path d="M-7.3 2 L2.1 -6.9" stroke="#555" stroke-width=".85" fill="none"/><path d="M-3 -2.2 L5.5 6" stroke="#1a1a1a" stroke-width="1.35" fill="none"/><circle cx="-3" cy="-2.2" r="1.05" fill="#1a1a1a"/></g>
<g transform="translate(640 298.2)"><rect x="-9.6" y="-9.6" width="19.2" height="19.2" rx="3.6" fill="#e3e3e3" opacity="0.78"/><path d="M-7.3 2 L2.1 -6.9" stroke="#555" stroke-width=".85" fill="none"/><path d="M-3 -2.2 L5.5 6" stroke="#1a1a1a" stroke-width="1.35" fill="none"/><circle cx="-3" cy="-2.2" r="1.05" fill="#1a1a1a"/></g>
<circle cx="423.3" cy="151.2" r="2.35" fill="#fff" stroke="#2dae22" stroke-width="2.05"/>
<circle cx="585.5" cy="151.2" r="2.35" fill="#fff" stroke="#2dae22" stroke-width="2.05"/>
<circle cx="446.7" cy="559.4" r="2.35" fill="#fff" stroke="#2dae22" stroke-width="2.05"/>
<circle cx="561.8" cy="559" r="2.35" fill="#fff" stroke="#2dae22" stroke-width="2.05"/>
<path d="M500.4 558.2 A4 4 0 0 1 508.4 558.2 Z" fill="#2dae22"/>
<circle cx="504.4" cy="107.5" r="2.45" fill="#fff" stroke="#2a62f2" stroke-width="2.0"/>
<circle cx="504.4" cy="561.9" r="2.45" fill="#fff" stroke="#2a62f2" stroke-width="2.0"/>
<circle cx="504.6" cy="317.3" r="2.45" fill="#fff" stroke="#2a62f2" stroke-width="2.0"/>
<circle cx="658.6" cy="317.3" r="2.45" fill="#fff" stroke="#2a62f2" stroke-width="2.0"/>
<circle cx="714" cy="317.3" r="2.45" fill="#fff" stroke="#2a62f2" stroke-width="2.0"/>
<circle cx="525.6" cy="295.8" r="3.2" fill="#2a62f2"/>
<circle cx="477.2" cy="344.6" r="3" fill="#6d9af5" stroke="#2a62f2" stroke-width=".8"/>
<path d="M385.2 107.5 H501 M516 107.5 H714.2 V376.3 M385.2 118 V551 M385.2 561.3 H424 M658.5 366.5 V376.3 M670 375.8 H703" stroke="#2e2e2e" stroke-width=".85" fill="none"/>
<path d="M424 561.3 H501.5" stroke="#2e2e2e" stroke-width=".85" opacity=".85"/>
<path d="M385.2 108.2 L382.3 119.7 H388.1 Z M385.2 560.6 L382.3 549.8 H388.1 Z M508.2 107.5 L516.8 104.8 V110.2 Z M713.8 107.5 L702.5 104.7 V110.3 Z M658.9 375.8 L671.2 373.1 V378.5 Z M713.8 375.8 L701.8 373.1 V378.5 Z" fill="#000"/>
<rect x="567.7" y="80.2" width="18.8" height="18.8" rx="3" fill="#dedede" opacity=".85"/>
<g transform="translate(577 89.4)"><path d="M-3.1 3.1 L3.1 -3.1" stroke="#111" fill="none" stroke-width="1.15" stroke-dasharray="2.6 1.3"/><path d="M4.7 -4.7 L0.8000000000000003 -4.0 L4.0 -0.8000000000000003 Z M-4.7 4.7 L-0.8000000000000003 4.0 L-4.0 0.8000000000000003 Z" fill="#111"/><circle cx="6.300000000000001" cy="-6.300000000000001" r=".55" fill="#555"/><circle cx="-6.300000000000001" cy="6.300000000000001" r=".55" fill="#555"/></g>
<g opacity=".999"><text x="593" y="95.7" font-family="Liberation Mono, monospace" font-size="16.6" fill="#111" stroke="#111" stroke-width=".35" textLength="47" lengthAdjust="spacingAndGlyphs">207.7</text>
<text x="646.3" y="95.7" font-family="Liberation Mono, monospace" font-size="16.6" fill="#111" stroke="#111" stroke-width=".3" textLength="18" lengthAdjust="spacingAndGlyphs">mm</text>
<path d="M605.4 92.6L608.9 87.3" stroke="#111" stroke-width="1.1"/></g>
<rect x="640.8" y="349.6" width="16.8" height="18.2" rx="3" fill="#dcdcdc" opacity=".9"/>
<g transform="translate(649.2 358.9)"><path d="M-2.6 2.6 L2.6 -2.6" stroke="#111" fill="none" stroke-width="1.15" stroke-dasharray="2.6 1.3"/><path d="M4.2 -4.2 L0.30000000000000027 -3.5 L3.5 -0.30000000000000027 Z M-4.2 4.2 L-0.30000000000000027 3.5 L-3.5 0.30000000000000027 Z" fill="#111"/><circle cx="5.800000000000001" cy="-5.800000000000001" r=".55" fill="#555"/><circle cx="-5.800000000000001" cy="5.800000000000001" r=".55" fill="#555"/></g>
<rect x="658.5" y="349.8" width="55.3" height="18" fill="#ededed"/>
<g opacity=".999"><text x="666" y="364.6" font-family="Liberation Sans, sans-serif" font-size="16.1" fill="#111" stroke="#111" stroke-width=".2">55</text><text x="688.6" y="364.6" font-family="Liberation Sans, sans-serif" font-size="17" fill="#111" textLength="19.6" lengthAdjust="spacingAndGlyphs">mm</text></g>
<path d="M658.5 351 V376.3" stroke="#2e2e2e" stroke-width=".85"/>
<rect x="714.8" y="349.6" width="17.4" height="18.2" rx="3" fill="#e2e2e2" opacity=".9"/>
<g transform="translate(723.2 358.3) scale(0.86)"><rect x="-4.6" y="-1.2" width="9.2" height="7" rx="1.2" fill="#000"/><path d="M-2.7 -1 V-3.2 A2.7 2.7 0 0 1 2.7 -3.2 V-1" fill="none" stroke="#000" stroke-width="1.5"/></g>
<rect x="358.5" y="289.5" width="18" height="18.5" rx="3" fill="#e2e2e2" opacity=".9"/>
<g transform="translate(367.4 299) rotate(-90)"><rect x="-4.6" y="-1.2" width="9.2" height="7" rx="1.2" fill="#000"/><path d="M-2.7 -1 V-3.2 A2.7 2.7 0 0 1 2.7 -3.2 V-1" fill="none" stroke="#000" stroke-width="1.5"/></g>
<g transform="translate(373.2 366.5) rotate(-90)"><g opacity=".999"><text x="0" y="0" font-family="Liberation Mono, monospace" font-size="16.6" fill="#111" stroke="#111" stroke-width=".35" textLength="28" lengthAdjust="spacingAndGlyphs">450</text><text x="34" y="0" font-family="Liberation Mono, monospace" font-size="16.6" fill="#111" stroke="#111" stroke-width=".3" textLength="18" lengthAdjust="spacingAndGlyphs">mm</text><path d="M21.6 -3.1L25.1 -8.4" stroke="#111" stroke-width="1.1"/></g></g>
<rect x="358.5" y="372.5" width="18" height="18.5" rx="3" fill="#dedede" opacity=".85"/>
<g transform="translate(367.5 381.8) rotate(-90)"><g transform="translate(0 0)"><path d="M-3.1999999999999997 3.1999999999999997 L3.1999999999999997 -3.1999999999999997" stroke="#111" fill="none" stroke-width="1.15" stroke-dasharray="2.6 1.3"/><path d="M4.8 -4.8 L0.8999999999999999 -4.1 L4.1 -0.8999999999999999 Z M-4.8 4.8 L-0.8999999999999999 4.1 L-4.1 0.8999999999999999 Z" fill="#111"/><circle cx="6.4" cy="-6.4" r=".55" fill="#555"/><circle cx="-6.4" cy="6.4" r=".55" fill="#555"/></g></g>
<g transform="translate(609.4 317.2)" fill="none" stroke="#fff" stroke-width="4.7" stroke-linecap="round" stroke-linejoin="round" style="filter:drop-shadow(0 .8px 1.5px rgba(0,0,0,.6))"><path d="M-7.5 -7.4 L0 -14.7 L7.5 -7.4 M0 -14.5 V14.5 M-7.5 7.4 L0 14.7 L7.5 7.4"/></g>
</svg>
<div class="pn" style="left:7.65px;top:21.65px;width:39.2px;height:75.2px;border-radius:9px;"></div>
<div class="pn" style="left:7.65px;top:128.65px;width:39.2px;height:38.7px;border-radius:9px;"></div>
<div class="pn" style="left:7.65px;top:175.65px;width:39.2px;height:38.45px;border-radius:9px;"></div>
<div class="pn" style="left:7.65px;top:222.65px;width:39.2px;height:116.45px;border-radius:9px;"></div>
<div class="pn" style="left:7.65px;top:347.4px;width:39.2px;height:38.550000000000004px;border-radius:9px;"></div>
<div class="pn" style="left:7.65px;top:393.9px;width:39.2px;height:38.95px;border-radius:9px;"></div>
<div class="pn" style="left:7.65px;top:450.15px;width:39.2px;height:38.95px;border-radius:9px;"></div>
<div class="pn" style="left:7.65px;top:496.84999999999997px;width:39.2px;height:111.4px;border-radius:9px;"></div>
<div class="pn" style="left:7.65px;top:624.75px;width:39.2px;height:39.7px;border-radius:9px;"></div>
<div class="pn" style="left:54.4px;top:624.75px;width:39.2px;height:39.7px;border-radius:9px;"></div>
<div class="pn" style="left:977.25px;top:22.4px;width:39.2px;height:109.9px;border-radius:9px;"></div>
<div class="pn" style="left:977.25px;top:141.25px;width:39.2px;height:39.300000000000004px;border-radius:9px;"></div>
<div class="pn" style="left:977.25px;top:197.55px;width:39.2px;height:39.300000000000004px;border-radius:9px;"></div>
<div class="pn" style="left:977.25px;top:244.05px;width:39.2px;height:224.79999999999998px;border-radius:9px;"></div>
<div class="pn" style="left:977.25px;top:477.25px;width:39.2px;height:39.0px;border-radius:9px;"></div>
<div class="pn" style="left:977.25px;top:524.15px;width:39.2px;height:75.4px;border-radius:9px;"></div>
<div class="pn" style="left:368.15px;top:22.349999999999998px;width:287.7px;height:38.2px;border-radius:9.5px;"></div>
<span class="sr">共有する 左面図 1 エッジ</span>
<div class="pn" style="left:867.3px;top:32.9px;width:17.2px;height:17.2px;border-radius:50%"></div>
<div class="pn" style="left:944.9px;top:32.9px;width:17.2px;height:17.2px;border-radius:50%"></div>
<div class="pl" style="left:52.3px;top:25.15px;width:78.4px;height:32.4px;border-radius:7.8px"><span class="sr">モデリング</span></div>
<div class="pl" style="left:52.3px;top:61.5px;width:66.10000000000001px;height:32.4px;border-radius:7.8px"><span class="sr">アイテム</span></div>
<div class="pl" style="left:52.3px;top:131.8px;width:40.900000000000006px;height:32.300000000000004px;border-radius:7.8px"><span class="sr">検索</span></div>
<div class="pl" style="left:52.3px;top:178.3px;width:129.29999999999998px;height:33.400000000000006px;border-radius:7.8px"><span class="sr">スケッチを終了する 光路</span></div>
<div class="pl" style="left:52.3px;top:225.3px;width:47.300000000000004px;height:33.400000000000006px;border-radius:7.8px"><span class="sr">線/弧 自動</span></div>
<div class="pl" style="left:52.3px;top:262.0px;width:81.8px;height:32.4px;border-radius:7.8px"><span class="sr">スプライン フィット</span></div>
<div class="pl" style="left:52.3px;top:303.65px;width:40.900000000000006px;height:32.4px;border-radius:7.8px"><span class="sr">詳細</span></div>
<div class="pl" style="left:52.3px;top:350.15px;width:53.300000000000004px;height:32.4px;border-radius:7.8px"><span class="sr">トリム</span></div>
<div class="pl" style="left:52.3px;top:397.4px;width:40.900000000000006px;height:32.0px;border-radius:7.8px"><span class="sr">削除</span></div>
<div class="pl" style="left:52.3px;top:453.29999999999995px;width:40.900000000000006px;height:33.1px;border-radius:7.8px"><span class="sr">構造 オフ</span></div>
<div class="pl" style="left:52.3px;top:500.15px;width:66.10000000000001px;height:32.7px;border-radius:7.8px"><span class="sr">分離する オフ</span></div>
<div class="pl" style="left:52.3px;top:536.9px;width:53.300000000000004px;height:31.8px;border-radius:7.8px"><span class="sr">断面図 オン</span></div>
<div class="pl" style="left:52.3px;top:572.4px;width:40.900000000000006px;height:32.7px;border-radius:7.8px"><span class="sr">測定</span></div>
<div class="pl" style="left:930.8px;top:144.4px;width:40.90000000000005px;height:32.300000000000004px;border-radius:7.8px"><span class="sr">履歴</span></div>
<div class="pl" style="left:906.0px;top:200.3px;width:65.7px;height:32.7px;border-radius:7.8px"><span class="sr">拘束設定</span></div>
<div class="pl" style="left:930.8px;top:247.0px;width:40.90000000000005px;height:32.7px;border-radius:7.8px"><span class="sr">平行</span></div>
<div class="pl" style="left:930.8px;top:283.4px;width:40.90000000000005px;height:32.7px;border-radius:7.8px"><span class="sr">垂直</span></div>
<div class="pl" style="left:930.8px;top:319.79999999999995px;width:40.90000000000005px;height:32.300000000000004px;border-radius:7.8px"><span class="sr">正接</span></div>
<div class="pl" style="left:930.8px;top:356.15px;width:40.90000000000005px;height:32.4px;border-radius:7.8px"><span class="sr">一致</span></div>
<div class="pl" style="left:918.6px;top:392.15px;width:53.09999999999998px;height:32.4px;border-radius:7.8px"><span class="sr">中間点</span></div>
<div class="pl" style="left:930.8px;top:433.4px;width:40.90000000000005px;height:32.300000000000004px;border-radius:7.8px"><span class="sr">詳細</span></div>
<div class="pl" style="left:906.0px;top:480.4px;width:65.7px;height:32.300000000000004px;border-radius:7.8px"><span class="sr">拘束解除</span></div>
<div class="pl" style="left:918.6px;top:527.3px;width:53.09999999999998px;height:32.300000000000004px;border-radius:7.8px"><span class="sr">ロック</span></div>
<div class="pl" style="left:893.3px;top:563.3px;width:78.40000000000005px;height:32.800000000000004px;border-radius:7.8px"><span class="sr">作図を作る</span></div>
<svg id="ui" width="1024" height="672" viewBox="0 0 1024 672" style="opacity:.999">
<g font-family="'Liberation Sans','Noto Sans CJK JP',sans-serif" font-weight="bold" font-size="12.7" fill="#1c1c1e">
<text x="59.4" y="46.07">モデリング</text>
<text x="59.4" y="82.42">アイテム</text>
<text x="59.4" y="152.67">検索</text>
<text x="59.4" y="194.42">スケッチを終了する</text>
<text x="59.4" y="241.42">線/弧</text>
<text x="59.4" y="278.12">スプライン</text>
<text x="59.4" y="324.57">詳細</text>
<text x="59.4" y="371.07">トリム</text>
<text x="59.4" y="418.12">削除</text>
<text x="59.4" y="469.42">構造</text>
<text x="59.4" y="516.27">分離する</text>
<text x="59.4" y="553.02">断面図</text>
<text x="59.4" y="593.47">測定</text>
<text x="938.2" y="165.27">履歴</text>
<text x="912.7" y="221.37">拘束設定</text>
<text x="938.2" y="268.07" fill="#8e8e93">平行</text>
<text x="938.2" y="304.47" fill="#8e8e93">垂直</text>
<text x="938.2" y="340.67" fill="#8e8e93">正接</text>
<text x="938.2" y="377.07" fill="#8e8e93">一致</text>
<text x="925.45" y="413.07" fill="#8e8e93">中間点</text>
<text x="938.2" y="454.27">詳細</text>
<text x="912.7" y="501.27">拘束解除</text>
<text x="925.45" y="548.17">ロック</text>
<text x="899.95" y="584.42">作図を作る</text>
</g>
<g font-family="'Liberation Sans','Noto Sans CJK JP',sans-serif" font-size="9.2" fill="#8a8a8e">
<text x="59.9" y="206.9">光路</text>
<text x="59.9" y="253.9">自動</text>
<text x="59.9" y="290.6">フィット</text>
<text x="59.9" y="481.9">オフ</text>
<text x="59.9" y="528.75">オフ</text>
<text x="59.9" y="565.5">オン</text>
</g>
<polygon points="27.20,30.50 17.76,35.95 17.76,46.85 27.20,52.30 36.64,46.85 36.64,35.95" fill="#8b8b8d"/>
<path d="M27.2 41.4V32.9M27.2 41.4L19.799999999999997 45.699999999999996M27.2 41.4L34.6 45.699999999999996" stroke="#fff" stroke-width="1.1"/>
<path d="M27.2 35.8L32.2 38.6L27.2 41.4L22.2 38.6Z" fill="#2f7df6"/>
<path d="M22.2 38.6L27.2 41.4V47.199999999999996L22.2 44.4Z" fill="#f03b35"/>
<path d="M32.2 38.6L27.2 41.4V47.199999999999996L32.2 44.4Z" fill="#2fb24a"/>
<path d="M27.2 68.0L36.2 73.6L27.2 79.19999999999999L18.2 73.6Z" fill="#000"/>
<path d="M18.2 77.6L20.6 76.1L27.2 80.2L33.8 76.1L36.2 77.6L27.2 83.2Z" fill="#8e8e93"/>
<path d="M18.2 82.19999999999999L20.6 80.69999999999999L27.2 84.8L33.8 80.69999999999999L36.2 82.19999999999999L27.2 87.8Z" fill="#8e8e93"/>
<path d="M15.8 105.4H38.6" stroke="#b5b5b7" stroke-width="1.4" stroke-linecap="round"/>
<circle cx="25.1" cy="146.2" r="6.9" fill="none" stroke="#1c1c1e" stroke-width="1.45"/><path d="M30.2 151.2L36.4 157" stroke="#1c1c1e" stroke-width="1.6" stroke-linecap="round"/>
<path d="M20.1 188.2L34.1 202M34.1 188.2L20.1 202" stroke="#1c1c1e" stroke-width="1.5" stroke-linecap="round"/>
<path d="M17.6 244.3L29.2 232.4" stroke="#111" stroke-width="1.7"/><path d="M24.6 251.4A11.8 11.8 0 0 1 36.4 239.6" stroke="#111" stroke-width="1.7" fill="none"/>
<circle cx="17.6" cy="244.3" r="1.35" fill="#6e6e73"/><circle cx="29.2" cy="232.4" r="1.35" fill="#6e6e73"/><circle cx="24.6" cy="251.4" r="1.35" fill="#6e6e73"/><circle cx="36.4" cy="239.6" r="1.35" fill="#6e6e73"/>
<path d="M40.6 251.79999999999998V255.2H37.2Z" fill="#8e8e93"/>
<path d="M18.1 287.2C24.5 287.2 26 283 27.1 278.2C28.2 273.4 29.6 269.3 35.5 269.3" stroke="#111" stroke-width="1.7" fill="none"/>
<circle cx="18.1" cy="287.2" r="1.35" fill="#6e6e73"/><circle cx="27.1" cy="278.2" r="1.35" fill="#6e6e73"/><circle cx="35.5" cy="269.3" r="1.35" fill="#6e6e73"/>
<path d="M40.6 288.0V291.4H37.2Z" fill="#8e8e93"/>
<path d="M15.5 298.8H38.9" stroke="#b5b5b7" stroke-width="1.4" stroke-linecap="round"/>
<circle cx="20.3" cy="319.7" r="1.45" fill="#111"/><circle cx="27.1" cy="319.7" r="1.45" fill="#111"/><circle cx="33.8" cy="319.7" r="1.45" fill="#111"/>
<path d="M40.6 329.0V332.4H37.2Z" fill="#8e8e93"/>
<circle cx="20.4" cy="362.7" r="2.6" fill="none" stroke="#111" stroke-width="1.4"/><circle cx="20.4" cy="370.7" r="2.6" fill="none" stroke="#111" stroke-width="1.4"/>
<path d="M22.3 368.3L37.6 362.2L37.2 363.4L30 368.2L23.2 370.3Z" fill="#111"/><path d="M22.3 365.3L37.6 371.4L37.2 370.2L30 365.4L23.2 363.3Z" fill="#111"/>
<path d="M17.8 404.2H36.5V406H17.8Z M23.6 404.2Q23.6 401.9 27.15 401.9Q30.7 401.9 30.7 404.2Z" fill="#000"/>
<path d="M19.3 407H35L33.9 422.4Q33.8 424.2 32 424.2H22.3Q20.5 424.2 20.4 422.4Z" fill="#000"/>
<path d="M24.6 410V420.8M27.15 410V420.8M29.7 410V420.8" stroke="#fff" stroke-width="1.05"/>
<path d="M15.8 441.5H38.6" stroke="#b5b5b7" stroke-width="1.4" stroke-linecap="round"/>
<path d="M18.3 463.7H36.1V470M18.3 463.7V475.7H27" stroke="#444" stroke-width="1.15" fill="none" stroke-dasharray="3.4 1.8 1.2 1.8"/>
<circle cx="18.3" cy="463.7" r="1.55" fill="#000"/><circle cx="36.1" cy="463.7" r="1.55" fill="#000"/><circle cx="18.3" cy="475.7" r="1.55" fill="#000"/>
<circle cx="32.8" cy="474.8" r="5.6" fill="#000"/><rect x="30.1" y="474.2" width="5.4" height="3.9" rx=".7" fill="#fff"/><path d="M31.3 474.4V473A1.5 1.5 0 0 1 34.3 473V474.4" stroke="#fff" stroke-width="1" fill="none"/>
<circle cx="19.4" cy="512" r="3.3" fill="#8e8e93"/>
<polygon points="30.10,508.40 22.13,513.00 22.13,522.20 30.10,526.80 38.07,522.20 38.07,513.00" fill="#fff" stroke="#000" stroke-width="1.2"/>
<polygon points="30.10,511.10 24.47,514.35 24.47,520.85 30.10,524.10 35.73,520.85 35.73,514.35" fill="#000"/>
<rect x="10.9" y="536.6" width="32.5" height="32.3" rx="5" fill="#000"/>
<defs><pattern id="hat" width="2.5" height="2.5" patternUnits="userSpaceOnUse" patternTransform="rotate(52)"><rect width="2.5" height="2.5" fill="#fff"/><rect width="2.5" height="1.15" fill="#000"/></pattern></defs>
<path d="M19.2 549V546.5Q19.2 542.6 27.3 542.6Q35.5 542.6 35.5 546.5V549Q32 546.6 27.3 546.6Q22.6 546.6 19.2 549Z" fill="#9c9c9e"/>
<path d="M19.2 549Q22.6 546.6 27.3 546.6Q32 546.6 35.5 549V561Q32 563.2 27.3 563.2Q22.6 563.2 19.2 561Z" fill="url(#hat)"/>
<path d="M24.7 547.6Q27.3 546.6 29.9 547.6V560.6Q27.3 559.8 24.7 560.6Z" fill="#fff"/>
<path d="M16.4 585.5A7.3 4.3 0 0 1 31 585.5V590.4H38V595.9H23.7Q16.4 595.9 16.4 591.5Z" fill="#8e8e93"/>
<ellipse cx="23.7" cy="585.4" rx="2.5" ry="1.35" fill="#fff"/>
<path d="M16.4 586.5Q17.5 590.6 25 590.6H31" stroke="#fff" stroke-width=".7" fill="none" opacity=".9"/>
<rect x="35.9" y="590.4" width="2.1" height="5.5" fill="#000"/>
<path d="M22.5 594.4V595.9M25 593.6V595.9M27.5 594.4V595.9M30 593.6V595.9M32.5 594.4V595.9M34.6 593.6V595.9" stroke="#000" stroke-width=".9"/>
<path d="M15.8 616.9H38.8" stroke="#b5b5b7" stroke-width="1.4" stroke-linecap="round"/>
<g transform="translate(26.9 644.8) scale(1 1)" fill="none" stroke="#111" stroke-width="1.5" stroke-linecap="round" stroke-linejoin="round"><circle r="9.4" stroke-width="1.6"/><path d="M-4.2 -1.9H1.2A3.15 3.15 0 0 1 1.2 4.4H-0.6"/><path d="M-1.7 -4.6L-4.4 -1.9L-1.7 0.8"/></g>
<g transform="translate(73.9 644.8) scale(-1 1)" fill="none" stroke="#b4b4b6" stroke-width="1.05" stroke-linecap="round" stroke-linejoin="round"><circle r="9.4" stroke-width="1.1500000000000001"/><path d="M-4.2 -1.9H1.2A3.15 3.15 0 0 1 1.2 4.4H-0.6"/><path d="M-1.7 -4.6L-4.4 -1.9L-1.7 0.8"/></g>
<path d="M988.7 39V44.2A8.4 8.4 0 0 0 1005.5 44.2V39H1000.6V44.2A3.5 3.5 0 0 1 993.6 44.2V39Z" fill="#8e8e93"/>
<rect x="988.7" y="36.3" width="4.9" height="2.5" fill="#000"/><rect x="1000.6" y="36.3" width="4.9" height="2.5" fill="#000"/>
<path d="M998.2 30.6L994.6 35.3H996.8L995.8 38.6L999.5 33.8H997.3Z" fill="#000"/>
<text x="996.9" y="75.7" text-anchor="middle" font-family="Liberation Mono, monospace" font-weight="bold" font-size="8.6" fill="#1c1c1e">10</text>
<text x="996.9" y="86.4" text-anchor="middle" font-family="Liberation Mono, monospace" font-weight="bold" font-size="10" fill="#1c1c1e" textLength="11.6" lengthAdjust="spacingAndGlyphs">mm</text>
<path d="M996.9 108.2V102.8" stroke="#2f6df6" stroke-width="1.6"/><path d="M992.0 116.7L987.1999999999999 119.3" stroke="#f0453a" stroke-width="1.4"/><path d="M1001.8 116.7L1006.6 119.3" stroke="#34b44a" stroke-width="1.4"/>
<polygon points="996.90,108.10 991.96,110.95 991.96,116.65 996.90,119.50 1001.84,116.65 1001.84,110.95" fill="#fff" stroke="#111" stroke-width="1.3" stroke-linejoin="round"/><path d="M996.9 113.8V119.5M996.9 113.8L992.0 110.95M996.9 113.8L1001.8 110.95" stroke="#111" stroke-width="1.2"/>
<circle cx="996.6" cy="160.5" r="9.2" fill="none" stroke="#5a5a5e" stroke-width=".95"/><path d="M997 155.4V161.1H991.8" stroke="#111" stroke-width="1.5" fill="none"/>
<circle cx="1002.4" cy="166.1" r="5.5" fill="#f23b31" stroke="#fff" stroke-width=".6"/><path d="M1002.4 163.1V166.6" stroke="#fff" stroke-width="1.15" stroke-linecap="round"/><circle cx="1002.4" cy="168.9" r=".75" fill="#fff"/>
<path d="M985.4 188.6H1008.5" stroke="#b5b5b7" stroke-width="1.4" stroke-linecap="round"/>
<path d="M1004.86 215.49 L1004.86 218.51 L1002.49 218.52 L1001.96 219.81 L1003.62 221.49 L1001.49 223.62 L999.81 221.96 L998.52 222.49 L998.51 224.86 L995.49 224.86 L995.48 222.49 L994.19 221.96 L992.51 223.62 L990.38 221.49 L992.04 219.81 L991.51 218.52 L989.14 218.51 L989.14 215.49 L991.51 215.48 L992.04 214.19 L990.38 212.51 L992.51 210.38 L994.19 212.04 L995.48 211.51 L995.49 209.14 L998.51 209.14 L998.52 211.51 L999.81 212.04 L1001.49 210.38 L1003.62 212.51 L1001.96 214.19 L1002.49 215.48Z" fill="#000" stroke="#000" stroke-width=".7" stroke-linejoin="round"/><circle cx="997" cy="217" r="2.8" fill="#fff"/>
<path d="M987.9 270.1L1000.5 257.4" stroke="#c2c2c6" stroke-width=".9"/><path d="M993.2 270.1L1006.2 257.4" stroke="#8a8a8e" stroke-width="1.4"/>
<path d="M990.5 292.3V306H1004.6" stroke="#c6c6ca" stroke-width=".9" fill="none"/><path d="M990.5 295.2A10.9 10.9 0 0 1 1001.6 306" stroke="#8a8a8e" stroke-width="1.4" fill="none"/>
<path d="M986 332.2H1007.7" stroke="#8a8a8e" stroke-width="1.1"/><circle cx="996.8" cy="332.2" r="1.2" fill="#77777b"/><path d="M995 332.4Q989.3 334 988 341.4M998.6 332.4Q1004.6 334 1006 341.4" stroke="#b4b4b8" stroke-width=".95" fill="none"/>
<path d="M986.8 374.5L999.5 362.3" stroke="#b0b0b4" stroke-width=".9"/><path d="M993.1 368.1L1004.9 380" stroke="#8a8a8e" stroke-width="1.4"/><circle cx="993.1" cy="368.1" r="1.25" fill="#77777b"/>
<path d="M987.7 417.2L1005.5 399" stroke="#b0b0b4" stroke-width=".9"/><path d="M990.4 401.7L1003.7 414.4" stroke="#8a8a8e" stroke-width="1.4"/><circle cx="996.8" cy="408.1" r="1.25" fill="#77777b"/><circle cx="987.7" cy="417.2" r="1" fill="#c4c4c8"/><circle cx="1005.5" cy="399" r="1" fill="#c4c4c8"/>
<path d="M985 429.1H1009" stroke="#b5b5b7" stroke-width="1.4" stroke-linecap="round"/>
<circle cx="989.9" cy="449.5" r="1.45" fill="#111"/><circle cx="996.8" cy="449.5" r="1.45" fill="#111"/><circle cx="1003.7" cy="449.5" r="1.45" fill="#111"/>
<path d="M984 459.8V463H987.2Z" fill="#8e8e93"/>
<path d="M994.3 493.9H990.5A2.9 2.9 0 0 0 990.5 499.7H994.3M1000.2 493.9H1003.6A2.9 2.9 0 0 1 1003.6 499.7H1000.2" stroke="#111" stroke-width="1.55" fill="none" stroke-linecap="round"/><path d="M993.8 496.8H1000.6" stroke="#77777b" stroke-width="1"/>
<rect x="991.4" y="541.6" width="11.3" height="8.6" rx="1.5" fill="#000"/><path d="M993.7 542V539.3A3.3 3.3 0 0 1 1000.3 539.3V542" stroke="#000" stroke-width="1.7" fill="none"/>
<path d="M988.2 574H1006V585.8H988.2Z" stroke="#444" stroke-width="1.15" fill="none" stroke-dasharray="3.4 1.8 1.2 1.8"/>
<circle cx="988.2" cy="574" r="1.45" fill="#000"/><circle cx="1006" cy="574" r="1.45" fill="#000"/><circle cx="988.2" cy="585.8" r="1.45" fill="#000"/><circle cx="1006" cy="585.8" r="1.45" fill="#000"/>
<path d="M390.6 41.2L401.9 31.7L413.2 41.2" stroke="#000" stroke-width="1.7" fill="none" stroke-linejoin="miter"/>
<path d="M393.4 41.8L401.9 34.6L410.4 41.8V50Q410.4 51.4 409 51.4H394.8Q393.4 51.4 393.4 50Z" fill="#000"/>
<rect x="407.9" y="33.6" width="2" height="5" fill="#000"/><rect x="399.1" y="43.9" width="5.6" height="6.2" fill="#fff"/>
<text x="432.7" y="46.8" font-family="Liberation Sans, sans-serif" font-weight="bold" font-size="15.9" fill="#111">F450</text>
<circle cx="490.5" cy="41.4" r="9.7" fill="#c8c8cb"/><path d="M485.9 39.7L490.5 44L495.1 39.7" stroke="#636366" stroke-width="1.5" fill="none" stroke-linecap="round" stroke-linejoin="round"/>
<rect x="517" y="26.1" width="79.5" height="31.1" rx="6" fill="#2356ff"/>
<text x="528.75" y="46.88" font-family="'Liberation Sans','Noto Sans CJK JP',sans-serif" font-size="13.8" fill="#fff">共有する</text>
<circle cx="624.5" cy="41.3" r="9.5" fill="none" stroke="#111" stroke-width="1.45"/><circle cx="620.6" cy="41.3" r="1.35" fill="#111"/><circle cx="624.5" cy="41.3" r="1.35" fill="#111"/><circle cx="628.4" cy="41.3" r="1.35" fill="#111"/>
<rect x="891.6" y="57.8" width="45.8" height="45.6" fill="#fbfbfb"/><rect x="896.7" y="62.4" width="35.6" height="35.8" fill="#efefef"/>
<path d="M938.5 55V104.1" stroke="#5b8df0" stroke-width="1.2"/><path d="M889.2 104.1H939" stroke="#7cc87c" stroke-width="1.2"/>
<text x="897.3" y="84.92" font-family="'Liberation Sans','Noto Sans CJK JP',sans-serif" font-size="11.2" fill="#222">左面図</text>
<text x="938.6" y="49.6" text-anchor="middle" font-family="Liberation Sans, sans-serif" font-size="8.6" fill="#5b8df0">Z</text>
<text x="880.7" y="107.2" text-anchor="middle" font-family="Liberation Sans, sans-serif" font-size="9.4" fill="#7cc87c">Y</text>
<g transform="translate(875.9 41.7) scale(1 1)" fill="none" stroke="#222" stroke-width="1.15" stroke-linecap="round" stroke-linejoin="round"><path d="M-2.6 2.8V1.2Q-2.6 -1.6 0.2 -1.6H2.6"/><path d="M0.9 -3.6L2.9 -1.6L0.9 0.4" /></g>
<g transform="translate(953.5 41.7) scale(-1 1)" fill="none" stroke="#222" stroke-width="1.15" stroke-linecap="round" stroke-linejoin="round"><path d="M-2.6 2.8V1.2Q-2.6 -1.6 0.2 -1.6H2.6"/><path d="M0.9 -3.6L2.9 -1.6L0.9 0.4" /></g>
<text x="440.2" y="650.8" font-family="Liberation Sans, sans-serif" font-size="11.2" fill="#1c1c1e" stroke="#1c1c1e" stroke-width=".3">1</text>
<text x="447.2" y="650.78" font-family="'Liberation Sans','Noto Sans CJK JP',sans-serif" font-size="10.4" font-weight="500" fill="#1c1c1e">エッジ</text>
<path d="M494.3 645.3C496.5 642.3 498 643.5 499.5 646.5C501 649.5 503 649.8 505.2 646.8L507.3 648.2" stroke="#111" stroke-width="1.2" fill="none"/><path d="M493.6 643.5L495.8 645.7L493.4 646.9Z M507.9 649.6L505.6 647.6L508 646.2Z" fill="#111"/>
<text x="513.3" y="650.8" font-family="Liberation Sans, sans-serif" font-size="11.2" fill="#1c1c1e" stroke="#1c1c1e" stroke-width=".3" textLength="47.3" lengthAdjust="spacingAndGlyphs">207.7 mm</text>
<circle cx="580.5" cy="646.9" r="7.3" fill="none" stroke="#111" stroke-width="1.15"/><path d="M581.9 643.8L578.7 646.9L581.9 650" stroke="#111" stroke-width="1.3" fill="none" stroke-linecap="round" stroke-linejoin="round"/>
</svg>
</body></html>
